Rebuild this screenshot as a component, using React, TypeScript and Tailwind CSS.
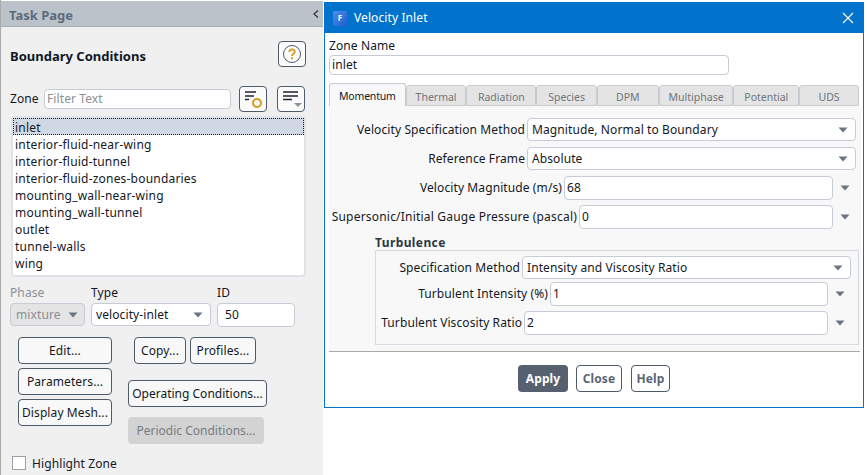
const zones = [
  "inlet",
  "interior-fluid-near-wing",
  "interior-fluid-tunnel",
  "interior-fluid-zones-boundaries",
  "mounting_wall-near-wing",
  "mounting_wall-tunnel",
  "outlet",
  "tunnel-walls",
  "wing",
];

const tabs = [
  { name: "Thermal", width: "w-[61px]" },
  { name: "Radiation", width: "w-[70px]" },
  { name: "Species", width: "w-[61px]" },
  { name: "DPM", width: "w-[62px]" },
  { name: "Multiphase", width: "w-[75px]" },
  { name: "Potential", width: "w-[66px]" },
  { name: "UDS", width: "w-[60px]" },
];

function Arrow({ className = "" }: { className?: string }) {
  return (
    <svg width="10" height="6" viewBox="0 0 10 6" className={className}>
      <path d="M0.5 0.5 H9.5 L5 5.5 Z" fill="#6b7480" />
    </svg>
  );
}

function IconButton({ children, className = "" }: { children: React.ReactNode; className?: string }) {
  return (
    <div className={`flex h-[26px] w-[28px] shrink-0 items-center justify-center rounded-[4px] border border-[#4f5b69] bg-[#fbfbfb] ${className}`}>
      {children}
    </div>
  );
}

function Btn({ label, className = "" }: { label: string; className?: string }) {
  return (
    <div className={`flex h-[27px] items-center justify-center rounded-[4px] border border-[#4f5b69] bg-[#f8f8f8] ${className}`}>
      {label}
    </div>
  );
}

function Select({ value, className = "" }: { value: string; className?: string }) {
  return (
    <div className={`flex h-[23px] items-center justify-between rounded-[4px] border border-[#c5ccd6] bg-white pl-[4px] pr-[7px] ${className}`}>
      <span className="pt-[1px]">{value}</span>
      <Arrow />
    </div>
  );
}

function NumberField({ value, className = "" }: { value: string; className?: string }) {
  return (
    <>
      <div className={`flex h-[24px] items-center rounded-[4px] border border-[#c5ccd6] bg-white pl-[2px] ${className}`}>
        {value}
      </div>
      <div className="flex w-[23px] shrink-0 justify-center">
        <Arrow />
      </div>
    </>
  );
}

function TaskPage() {
  return (
    <div className="h-[475px] w-[323px] shrink-0 border-l border-[#a9a9a9] bg-[#f0f0f0]">
      <div className="flex h-[27px] items-center justify-between border-t border-b border-t-white border-b-[#a9aeb5] bg-[#bcc2c9] pl-[8px] pr-[4px] text-[13px] font-bold tracking-normal text-[#5b6b7d]">
        <span className="pt-[3px]">Task Page</span>
        <svg width="6" height="8" viewBox="0 0 6 8">
          <path d="M5 0.5 L1 4 L5 7.5" fill="none" stroke="#333" strokeWidth="1.2" />
        </svg>
      </div>

      <div className="mt-[14px] flex items-center justify-between pl-[9px] pr-[17px]">
        <span className="pt-[4px] text-[13px] font-bold tracking-normal text-[#101828]">Boundary Conditions</span>
        <IconButton>
          <svg width="20" height="20" viewBox="0 0 20 20">
            <circle cx="10" cy="10" r="8.5" fill="none" stroke="#4f5b69" strokeWidth="1" />
            <path d="M7.3 8 C7.3 4.6 12.8 4.6 12.8 7.8 C12.8 9.8 10 9.8 10 12" fill="none" stroke="#d69a1e" strokeWidth="1.8" />
            <rect x="9" y="13.3" width="2" height="2" fill="#d69a1e" />
          </svg>
        </IconButton>
      </div>

      <div className="mt-[19px] flex items-center pl-[9px] pr-[17px]">
        <span className="w-[34px]">Zone</span>
        <div className="flex h-[20px] w-[187px] items-center rounded-[4px] border border-[#c5ccd6] bg-white pl-[2px] text-[#8a8f96]">
          Filter Text
        </div>
        <IconButton className="ml-[8px]">
          <svg width="20" height="20" viewBox="0 0 20 20">
            <path d="M2 3 H13 M2 7 H11 M2 10.5 H6" stroke="#1f2630" strokeWidth="1.6" />
            <circle cx="14" cy="14" r="4" fill="none" stroke="#d69a1e" strokeWidth="2" />
          </svg>
        </IconButton>
        <IconButton className="ml-[10px]">
          <svg width="22" height="20" viewBox="0 0 22 20">
            <path d="M3 3 H18 M3 7 H18 M3 10.5 H12" stroke="#1f2630" strokeWidth="1.6" />
            <path d="M14 14 H22 L18 18 Z" fill="#8a929c" />
          </svg>
        </IconButton>
      </div>

      <div className="ml-[10px] mt-[4px] h-[161px] w-[295px] rounded-[4px] border-2 border-[#dfe3e8] bg-white tracking-[0.2px]">
        {zones.map((zone) => (
          <div
            key={zone}
            className={`flex h-[17px] items-center pt-[2px] ${zone === "inlet" ? "border border-dotted border-[#222] bg-[#cfd8e3] pl-[1px]" : "pl-[2px]"}`}
          >
            {zone}
          </div>
        ))}
      </div>

      <div className="mt-[9px] flex items-start pl-[9px]">
        <div className="w-[81px] pt-[1px]">
          <div className="mb-[4px] text-[#8a8f96]">Phase</div>
          <div className="flex h-[23px] w-[75px] items-center justify-between rounded-[4px] border border-[#c5ccd6] bg-[#e4e4e4] pl-[5px] pr-[6px] text-[#8a8f96]">
            <span className="pt-[1px]">mixture</span>
            <Arrow />
          </div>
        </div>
        <div className="w-[126px] pt-[1px]">
          <div className="mb-[4px]">Type</div>
          <Select value="velocity-inlet" className="w-[120px]" />
        </div>
        <div className="pt-[1px]">
          <div className="mb-[4px]">ID</div>
          <div className="flex h-[24px] w-[78px] items-center rounded-[4px] border border-[#c5ccd6] bg-white pl-[7px]">50</div>
        </div>
      </div>

      <div className="mt-[10px] flex pl-[17px]">
        <div className="flex w-[94px] flex-col gap-[4px]">
          <Btn label="Edit..." />
          <Btn label="Parameters..." />
          <Btn label="Display Mesh..." />
        </div>
        <div className="ml-[16px] flex flex-col">
          <div className="ml-[6px] flex gap-[4px]">
            <Btn label="Copy..." className="w-[52px]" />
            <Btn label="Profiles..." className="w-[66px]" />
          </div>
          <Btn label="Operating Conditions..." className="mt-[16px] w-[139px] tracking-normal" />
          <div className="mt-[10px] flex h-[27px] w-[136px] items-center justify-center rounded-[4px] bg-[#d3d3d3] pt-[1px] text-[#777c82] tracking-normal">
            Periodic Conditions...
          </div>
        </div>
      </div>

      <div className="ml-[11px] mt-[12px] flex items-center gap-[6px]">
        <div className="h-[14px] w-[14px] border border-[#9aa0a8] bg-white" />
        <span className="pt-[2px]">Highlight Zone</span>
      </div>
    </div>
  );
}

function VelocityInlet() {
  return (
    <div className="mt-[2px] ml-[1px] h-[406px] w-[540px] shrink-0 border border-[#0173cc] bg-white">
      <div className="flex h-[30px] items-center justify-between bg-[#0173cc] pl-[8px] pr-[9px] text-white">
        <div className="flex items-center gap-[7px]">
          <div className="flex h-[15px] w-[14px] items-center justify-center bg-linear-to-br from-[#4a8cf0] to-[#1f5fd0] text-[8px] font-bold leading-none text-white">F</div>
          <span>Velocity Inlet</span>
        </div>
        <svg width="12" height="12" viewBox="0 0 12 12">
          <path d="M1 1 L11 11 M11 1 L1 11" stroke="white" strokeWidth="1.1" />
        </svg>
      </div>

      <div className="px-[4px]">
        <div className="mt-[4px] leading-[18px]">Zone Name</div>
        <div className="flex h-[20px] w-[400px] items-center rounded-[4px] border border-[#c5ccd6] bg-white pl-[2px]">inlet</div>

        <div className="mt-[8px] flex h-[23px] items-end text-[10.5px] tracking-normal">
          <div className="flex h-[23px] w-[77px] items-center justify-center rounded-t-[3px] border border-b-0 border-[#c5ccd6] bg-[#f8f8f8] pt-[2px] tracking-[-0.2px]">
            Momentum
          </div>
          {tabs.map((tab) => (
            <div
              key={tab.name}
              className={`flex h-[21px] items-center justify-center rounded-t-[3px] border border-[#c8ccd2] bg-[#e4e4e4] pt-[3px] text-[#6f767e] ${tab.width}`}
            >
              {tab.name}
            </div>
          ))}
        </div>

        <div className="h-[245px] w-[532px] bg-[#f8f8f8] pt-[12px]">
          <div className="flex items-center justify-end pr-[5px]">
            <span className="mr-[2px]">Velocity Specification Method</span>
            <Select value="Magnitude, Normal to Boundary" className="w-[329px]" />
          </div>
          <div className="mt-[6px] flex items-center justify-end pr-[5px]">
            <span className="mr-[2px] pt-[1px]">Reference Frame</span>
            <Select value="Absolute" className="w-[329px]" />
          </div>
          <div className="mt-[6px] flex items-center justify-end pr-[5px]">
            <span className="mr-[2px]">Velocity Magnitude (m/s)</span>
            <NumberField value="68" className="w-[269px]" />
          </div>
          <div className="mt-[5px] flex items-center justify-end pr-[5px]">
            <span className="mr-[2px] tracking-[0.2px]">Supersonic/Initial Gauge Pressure (pascal)</span>
            <NumberField value="0" className="w-[254px]" />
          </div>

          <div className="ml-[46px] mt-[8px] font-bold tracking-[0.4px] text-[#2c3644]">Turbulence</div>
          <div className="ml-[46px] mt-[1px] h-[95px] w-[484px] border border-[#d5dbe3] pt-[5px]">
            <div className="flex items-center justify-end pr-[7px]">
              <span className="mr-[2px]">Specification Method</span>
              <Select value="Intensity and Viscosity Ratio" className="w-[329px]" />
            </div>
            <div className="mt-[3px] flex items-center justify-end pr-[7px]">
              <span className="mr-[2px]">Turbulent Intensity (%)</span>
              <NumberField value="1" className="w-[278px]" />
            </div>
            <div className="mt-[5px] flex items-center justify-end pr-[7px]">
              <span className="mr-[2px]">Turbulent Viscosity Ratio</span>
              <NumberField value="2" className="w-[304px]" />
            </div>
          </div>
        </div>

        <div className="h-px w-[531px] bg-[#a9a9a9]" />

        <div className="mt-[13px] flex pl-[189px] font-bold text-[#5b6674]">
          <div className="flex h-[27px] w-[50px] items-center justify-center rounded-[4px] bg-[#56606e] pt-[1px] text-white">Apply</div>
          <Btn label="Close" className="ml-[8px] w-[46px] bg-white pt-[1px]" />
          <Btn label="Help" className="ml-[9px] w-[39px] bg-white pt-[1px]" />
        </div>
      </div>
    </div>
  );
}

export default function App() {
  return (
    <div className="flex h-[475px] w-[867px] overflow-hidden bg-white font-['Noto_Sans',sans-serif] text-[12px] leading-none tracking-[0.1px] text-[#14181f]">
      <TaskPage />
      <VelocityInlet />
    </div>
  );
}
